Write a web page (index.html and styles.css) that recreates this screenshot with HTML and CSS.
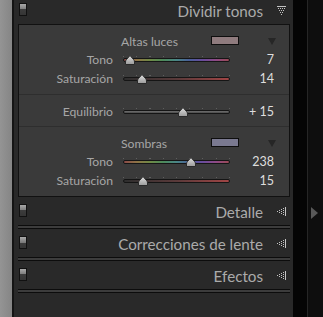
FILE: index.html
```html
<!DOCTYPE html>
<html lang="es">
<head>
<meta charset="utf-8">
<title>Dividir tonos</title>
<link rel="stylesheet" href="styles.css">
</head>
<body>
<div class="app">
  <div class="left-strip"></div>
  <div class="panel">
    <div class="hdr hdr-first">
      <span class="toggle"></span>
      <span class="hdr-title">Dividir tonos</span>
      <svg class="hdr-icon" width="9" height="9" viewBox="0 0 9 9"><g fill="#c4c4c4"><rect x="0" y="0" width="9" height="1"/><rect x="1" y="2" width="1" height="1"/><rect x="3" y="2" width="1" height="1"/><rect x="5" y="2" width="1" height="1"/><rect x="7" y="2" width="1" height="1"/><rect x="2" y="4" width="1" height="1"/><rect x="4" y="4" width="1" height="1"/><rect x="6" y="4" width="1" height="1"/><rect x="3" y="6" width="1" height="1"/><rect x="5" y="6" width="1" height="1"/><rect x="4" y="8" width="1" height="1"/></g></svg>
    </div>
    <div class="box">
      <div class="sec">
        <div class="sec-head">
          <span class="sec-title">Altas luces</span>
          <span class="swatch swatch-hi"></span>
          <span class="tri"></span>
        </div>
        <div class="row">
          <span class="lbl">Tono</span>
          <div class="slider"><div class="ticks"></div><div class="track track-hue"></div><svg class="thumb" style="left:2px" width="10" height="10" viewBox="0 0 10 10"><path d="M5 0.5 L8.5 4.5 Q9.5 5.5 9.5 7 L9.5 9.5 L0.5 9.5 L0.5 7 Q0.5 5.5 1.5 4.5 Z" fill="url(#tg)" stroke="#2a2a2a" stroke-width="1"/></svg></div>
          <span class="val">7</span>
        </div>
        <div class="row">
          <span class="lbl">Saturación</span>
          <div class="slider"><div class="ticks"></div><div class="track track-sat"></div><svg class="thumb" style="left:14px" width="10" height="10" viewBox="0 0 10 10"><path d="M5 0.5 L8.5 4.5 Q9.5 5.5 9.5 7 L9.5 9.5 L0.5 9.5 L0.5 7 Q0.5 5.5 1.5 4.5 Z" fill="url(#tg)" stroke="#2a2a2a" stroke-width="1"/></svg></div>
          <span class="val">14</span>
        </div>
      </div>
      <div class="sec sec-mid">
        <div class="row">
          <span class="lbl">Equilibrio</span>
          <div class="slider"><div class="ticks"></div><div class="track track-bal"></div><svg class="thumb" style="left:55px" width="10" height="10" viewBox="0 0 10 10"><path d="M5 0.5 L8.5 4.5 Q9.5 5.5 9.5 7 L9.5 9.5 L0.5 9.5 L0.5 7 Q0.5 5.5 1.5 4.5 Z" fill="url(#tg)" stroke="#2a2a2a" stroke-width="1"/></svg></div>
          <span class="val">+ 15</span>
        </div>
      </div>
      <div class="sec sec-last">
        <div class="sec-head">
          <span class="sec-title">Sombras</span>
          <span class="swatch swatch-lo"></span>
          <span class="tri"></span>
        </div>
        <div class="row">
          <span class="lbl">Tono</span>
          <div class="slider"><div class="ticks"></div><div class="track track-hue"></div><svg class="thumb" style="left:63px" width="10" height="10" viewBox="0 0 10 10"><path d="M5 0.5 L8.5 4.5 Q9.5 5.5 9.5 7 L9.5 9.5 L0.5 9.5 L0.5 7 Q0.5 5.5 1.5 4.5 Z" fill="url(#tg)" stroke="#2a2a2a" stroke-width="1"/></svg></div>
          <span class="val">238</span>
        </div>
        <div class="row">
          <span class="lbl">Saturación</span>
          <div class="slider"><div class="ticks"></div><div class="track track-sat"></div><svg class="thumb" style="left:15px" width="10" height="10" viewBox="0 0 10 10"><path d="M5 0.5 L8.5 4.5 Q9.5 5.5 9.5 7 L9.5 9.5 L0.5 9.5 L0.5 7 Q0.5 5.5 1.5 4.5 Z" fill="url(#tg)" stroke="#2a2a2a" stroke-width="1"/></svg></div>
          <span class="val">15</span>
        </div>
      </div>
    </div>

    <div class="hdr">
      <span class="toggle"></span>
      <span class="hdr-title">Detalle</span>
      <svg class="hdr-icon" width="9" height="9" viewBox="0 0 9 9"><g fill="#c4c4c4"><rect x="8" y="0" width="1" height="9"/><rect x="6" y="1" width="1" height="1"/><rect x="6" y="3" width="1" height="1"/><rect x="6" y="5" width="1" height="1"/><rect x="6" y="7" width="1" height="1"/><rect x="4" y="2" width="1" height="1"/><rect x="4" y="4" width="1" height="1"/><rect x="4" y="6" width="1" height="1"/><rect x="2" y="3" width="1" height="1"/><rect x="2" y="5" width="1" height="1"/><rect x="0" y="4" width="1" height="1"/></g></svg>
    </div>
    <div class="groove"></div>

    <div class="hdr">
      <span class="toggle"></span>
      <span class="hdr-title">Correcciones de lente</span>
      <svg class="hdr-icon" width="9" height="9" viewBox="0 0 9 9"><g fill="#c4c4c4"><rect x="8" y="0" width="1" height="9"/><rect x="6" y="1" width="1" height="1"/><rect x="6" y="3" width="1" height="1"/><rect x="6" y="5" width="1" height="1"/><rect x="6" y="7" width="1" height="1"/><rect x="4" y="2" width="1" height="1"/><rect x="4" y="4" width="1" height="1"/><rect x="4" y="6" width="1" height="1"/><rect x="2" y="3" width="1" height="1"/><rect x="2" y="5" width="1" height="1"/><rect x="0" y="4" width="1" height="1"/></g></svg>
    </div>
    <div class="groove"></div>

    <div class="hdr">
      <span class="toggle"></span>
      <span class="hdr-title">Efectos</span>
      <svg class="hdr-icon" width="9" height="9" viewBox="0 0 9 9"><g fill="#c4c4c4"><rect x="8" y="0" width="1" height="9"/><rect x="6" y="1" width="1" height="1"/><rect x="6" y="3" width="1" height="1"/><rect x="6" y="5" width="1" height="1"/><rect x="6" y="7" width="1" height="1"/><rect x="4" y="2" width="1" height="1"/><rect x="4" y="4" width="1" height="1"/><rect x="4" y="6" width="1" height="1"/><rect x="2" y="3" width="1" height="1"/><rect x="2" y="5" width="1" height="1"/><rect x="0" y="4" width="1" height="1"/></g></svg>
    </div>
    <div class="groove"></div>
  </div>
  <div class="gap"></div>
  <div class="right"><span class="arrow"></span></div>
</div>
<svg class="defs" width="0" height="0"><defs><linearGradient id="tg" x1="0" y1="0" x2="0" y2="1"><stop offset="0" stop-color="#e0e0e0"/><stop offset="1" stop-color="#9a9a9a"/></linearGradient></defs></svg>
</body>
</html>
```
FILE: styles.css
```css
html, body {
  margin: 0;
  padding: 0;
  background: #0f0f0f;
  overflow: hidden;
}
.defs { position: absolute; }
.app {
  display: flex;
  width: 323px;
  height: 317px;
  font-family: Lato, "Liberation Sans", sans-serif;
}
.left-strip {
  width: 12px;
  background: linear-gradient(to right, #949494, #858585);
  border-right: 2px solid #141414;
}
.panel {
  width: 279px;
  background: #292929;
  display: flex;
  flex-direction: column;
}
.gap {
  width: 14px;
  background: #050505;
  border-right: 1px solid #262626;
}
.right {
  flex: 1;
  background: #0e0e0e;
  display: flex;
  flex-direction: column;
  padding-top: 207px;
  padding-left: 3px;
}
.arrow {
  width: 0;
  height: 0;
  border-left: 7px solid #585858;
  border-top: 6px solid transparent;
  border-bottom: 6px solid transparent;
}

/* headers */
.hdr {
  height: 28px;
  display: flex;
  align-items: center;
  flex: none;
}
.hdr-first { margin-top: -4px; }
.toggle {
  width: 8px;
  height: 13px;
  box-sizing: border-box;
  margin-left: 5px;
  border: 1px solid #111;
  background: linear-gradient(to bottom, #a8a8a8 0, #7a7a7a 50%, #3c3c3c 50%, #353535 100%);
  margin-top: -1px;
}
.hdr-title {
  flex: 1;
  text-align: right;
  font-size: 15.2px;
  color: #ababab;
  line-height: 18px;
  margin-top: 2px;
}
.hdr-icon {
  margin-left: 14px;
  margin-right: 7px;
  flex: none;
}

.groove {
  height: 4px;
  box-sizing: border-box;
  margin: 0 3px 0 4px;
  border-top: 1px solid #0c0c0c;
  border-bottom: 1px solid #0c0c0c;
  background: #3c3c3c;
  flex: none;
}

/* expanded box */
.box {
  margin: 0 3px 0 4px;
  border: 1px solid #111;
  background: #3a3a3a;
  flex: none;
}
.sec {
  padding: 7px 0 6px;
}
.sec-mid, .sec-last {
  border-top: 1px solid #2e2e2e;
}
.sec-mid { padding: 7px 0 5px; }
.sec-last { padding: 7px 0 6px; }
.sec-head {
  height: 18px;
  display: flex;
  align-items: center;
  padding-left: 102px;
}
.sec-title {
  width: 90px;
  font-size: 12.2px;
  color: #a6a6a6;
}
.swatch {
  width: 28px;
  height: 9px;
  box-sizing: border-box;
  border: 1px solid #0e0e0e;
  margin-top: -1px;
}
.swatch-hi { background: #8f7b7e; }
.swatch-lo { background: #7a7990; }
.tri {
  margin-left: 29px;
  width: 0;
  height: 0;
  border-top: 7px solid #262626;
  border-left: 4px solid transparent;
  border-right: 4px solid transparent;
}

.row {
  height: 19px;
  display: flex;
  align-items: center;
}
.lbl {
  width: 94px;
  text-align: right;
  font-size: 12.2px;
  color: #a6a6a6;
}
.slider {
  position: relative;
  width: 107px;
  height: 19px;
  margin-left: 10px;
}
.ticks {
  position: absolute;
  left: 0;
  right: 0;
  top: 6px;
  height: 1px;
  background: repeating-linear-gradient(to right, #5e5e5e 0, #5e5e5e 1px, transparent 1px, transparent 13.25px);
}
.track {
  position: absolute;
  left: 0;
  right: 0;
  top: 8px;
  height: 4px;
  box-sizing: border-box;
  border: 1px solid #151515;
  border-radius: 2px;
}
.track-hue {
  background: linear-gradient(to right, #8a4a48, #8d7446, #6f8a46, #4d8a5c, #4a8686, #4a5e9a, #6a4c9c, #8e4a86, #9a4a55);
}
.track-sat {
  background: linear-gradient(to right, #2e2e2e, #5a3a3a, #a04545);
}
.track-bal {
  background: linear-gradient(to bottom, #707070, #4a4a4a);
}
.thumb {
  position: absolute;
  top: 5px;
}
.val {
  width: 44px;
  text-align: right;
  font-size: 12.5px;
  color: #dedede;
}
```
